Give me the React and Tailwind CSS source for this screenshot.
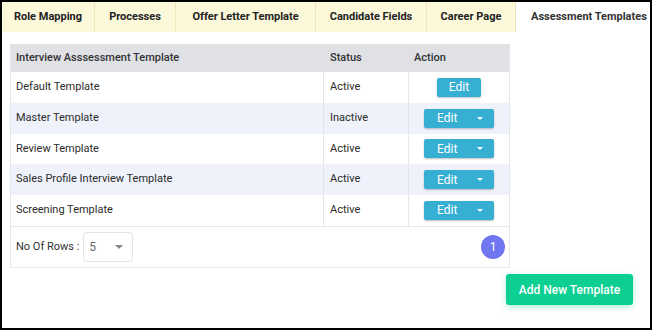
import React from 'react';

const tabs = [
  { label: 'Role Mapping', w: 'w-[93px]' },
  { label: 'Processes', w: 'w-[81px]' },
  { label: 'Offer Letter Template', w: 'w-[140px]' },
  { label: 'Candidate Fields', w: 'w-[111px]' },
  { label: 'Career Page', w: 'w-[89px]' },
];

const rows = [
  { name: 'Default Template', status: 'Active', split: false },
  { name: 'Master Template', status: 'Inactive', split: true },
  { name: 'Review Template', status: 'Active', split: true },
  { name: 'Sales Profile Interview Template', status: 'Active', split: true },
  { name: 'Screening Template', status: 'Active', split: true },
];

const Caret = ({ className }) => (
  <svg viewBox="0 0 8 4" className={className}>
    <path d="M0 0h8L4 4z" fill="currentColor" />
  </svg>
);

const App = () => {
  return (
    <div
      className="w-[652px] h-[330px] border-2 border-black bg-white flex flex-col text-[#333] overflow-hidden"
      style={{ fontFamily: 'Roboto, "Liberation Sans", sans-serif' }}
    >
      {/* Tabs */}
      <div className="flex h-[30px] bg-[#fcf8da] shrink-0">
        {tabs.map((t) => (
          <div
            key={t.label}
            className={`${t.w} flex items-center justify-center border-r border-[#ede7b8] text-[11px] font-bold text-[#222]`}
          >
            {t.label}
          </div>
        ))}
        <div className="flex-1 flex items-center pl-[15px] bg-white text-[11px] font-bold text-[#333]">
          Assessment Templates
        </div>
      </div>

      {/* Table card */}
      <div className="ml-[8px] mt-[12px] w-[500px] border border-[#e4e6ea]">
        <div className="flex h-[27px] bg-[#dfe1e5] text-[11px] font-medium text-[#333]">
          <div className="w-[313px] flex items-center pl-[5px]">Interview Asssessment Template</div>
          <div className="w-[85px] flex items-center pl-[6px]">Status</div>
          <div className="flex-1 flex items-center pl-[5px]">Action</div>
        </div>
        {rows.map((r, i) => (
          <div
            key={r.name}
            className={`flex h-[30.75px] text-[11px] text-[#2b2b2b] ${i % 2 === 1 ? 'bg-[#eff2fa]' : 'bg-white'}`}
          >
            <div className="w-[313px] flex items-center pl-[5px] border-r border-[#e4e6ea]">{r.name}</div>
            <div className="w-[85px] flex items-center pl-[6px] border-r border-[#e4e6ea]">{r.status}</div>
            <div className="flex-1 flex items-center justify-center">
              {r.split ? (
                <button className="w-[70px] h-[19px] bg-[#37afd3] rounded-[2px] text-white text-[12px] flex items-center shadow-[0_1px_2px_rgba(0,0,0,0.25)]">
                  <span className="pl-[13px]">Edit</span>
                  <Caret className="w-[6px] h-[3px] ml-auto mr-[11px]" />
                </button>
              ) : (
                <button className="w-[44px] h-[19px] bg-[#37afd3] rounded-[2px] text-white text-[12px] flex items-center justify-center shadow-[0_1px_2px_rgba(0,0,0,0.25)]">
                  Edit
                </button>
              )}
            </div>
          </div>
        ))}
        <div className="flex items-center h-[41.25px] border-t border-[#e4e6ea] pl-[5px] pr-[4px] text-[11px]">
          <span>No Of Rows :</span>
          <div className="ml-[4px] w-[50px] h-[30px] border border-[#e2e4e8] rounded-[4px] flex items-center pl-[5px] pr-[9px] text-[12px] text-[#666]">
            <span>5</span>
            <Caret className="w-[8px] h-[4px] ml-auto text-[#888]" />
          </div>
          <div className="ml-auto w-[24px] h-[24px] rounded-full bg-[#6f76ef] text-white text-[12px] flex items-center justify-center">
            1
          </div>
        </div>
      </div>

      {/* Add button */}
      <div className="flex justify-end pr-[17px] mt-[6px]">
        <button className="w-[127px] h-[31px] bg-[#0dcf91] rounded-[3px] text-white text-[12px] font-medium shadow-[0_2px_6px_rgba(13,207,145,0.35)]">
          Add New Template
        </button>
      </div>
    </div>
  );
};

export default App;
